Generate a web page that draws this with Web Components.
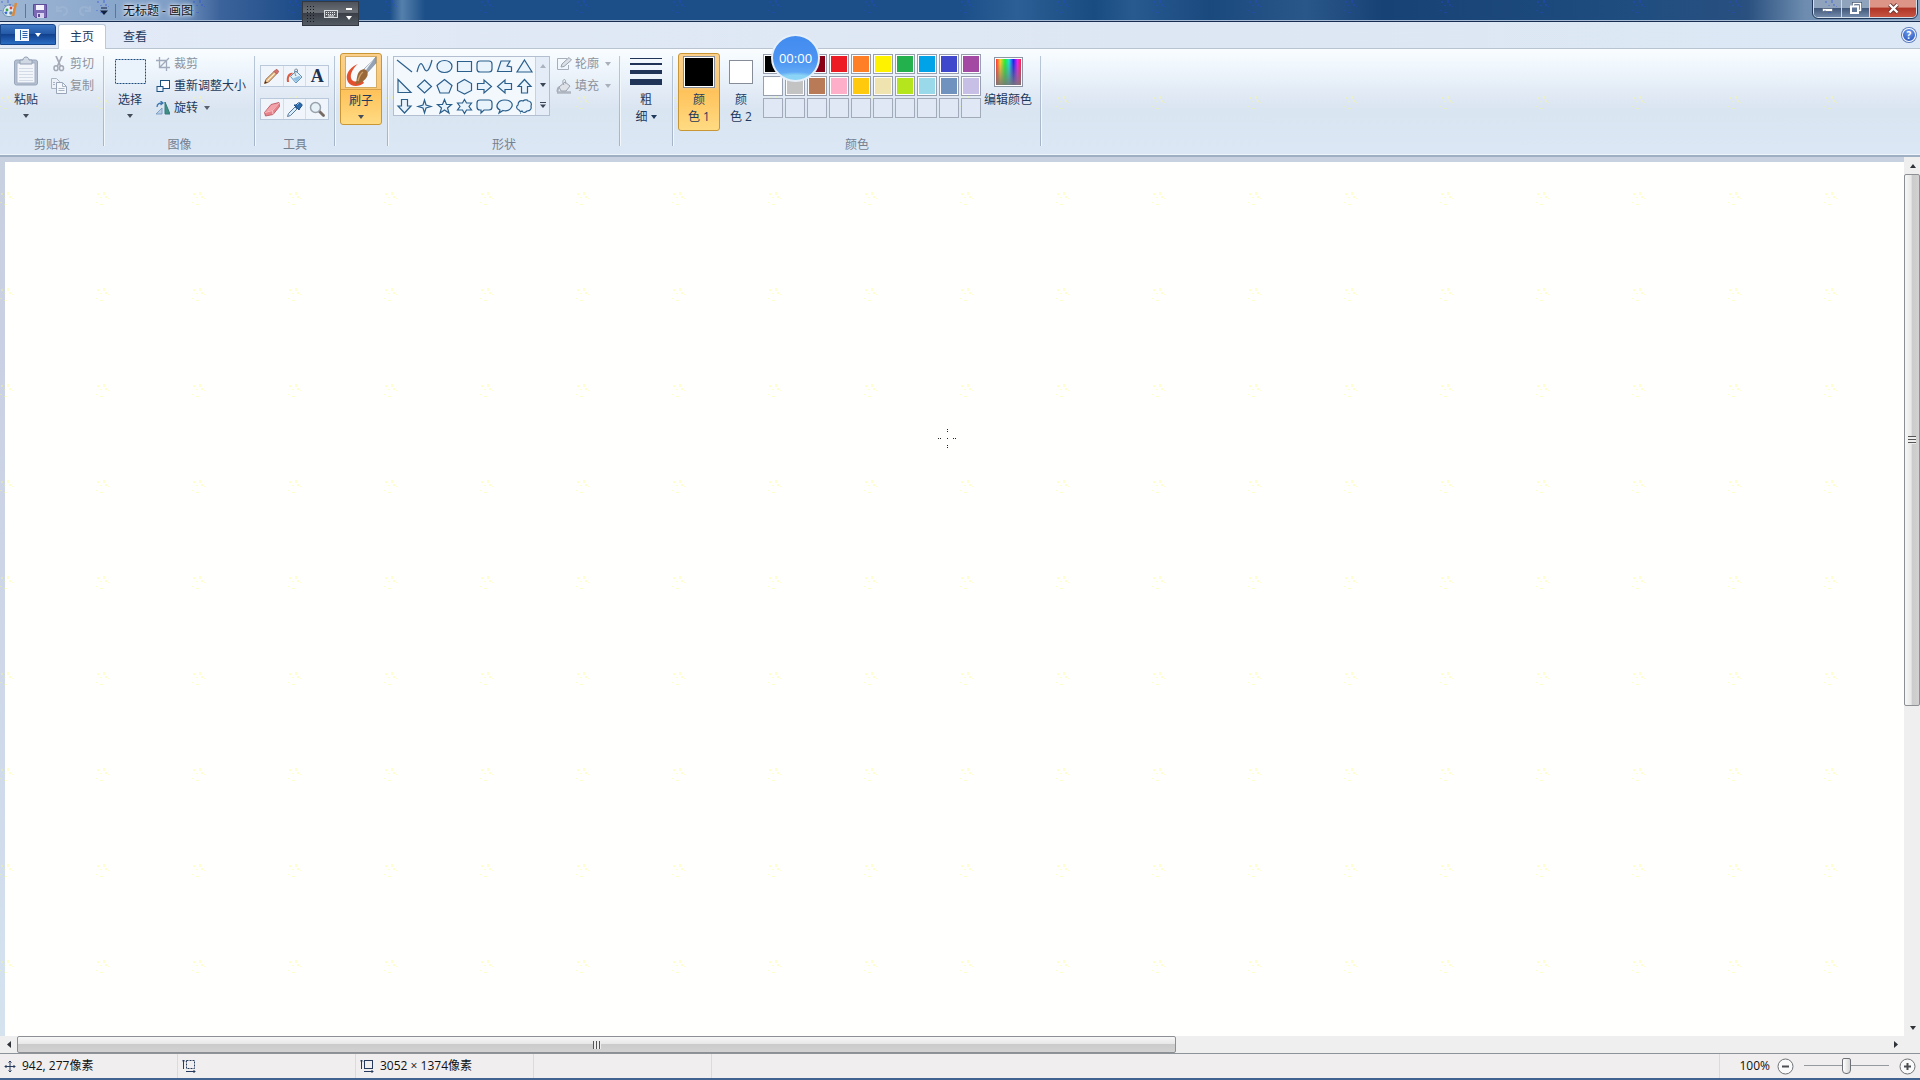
<!DOCTYPE html>
<html lang="zh-CN">
<head>
<meta charset="utf-8">
<title>无标题 - 画图</title>
<style>
html,body{margin:0;height:100%;overflow:hidden}
body{font:12px/16px "Open Sans","Noto Sans CJK SC",sans-serif;color:#1e395b}
</style>
</head>
<body>
<paint-app></paint-app>
<script>
const BASE = `
:host{box-sizing:border-box}
*{box-sizing:border-box}
button{font:inherit;color:inherit;background:none;border:0;padding:0;margin:0;display:block}
svg{display:block;flex:none}
`;
function define(name, html, setup) {
  customElements.define(name, class extends HTMLElement {
    connectedCallback() {
      if (this.shadowRoot) return;
      const root = this.attachShadow({mode: 'open'});
      const t = document.createElement('template');
      const body = typeof html === 'function' ? html(this) : html;
      t.innerHTML = `<style>${BASE}</style>${body}`;
      root.append(t.content.cloneNode(true));
      if (setup) setup(root, this);
    }
  });
}

const ICONS = {
  app: [16,17,'<path d="M1 11C1 6 4 3 8 3c4 0 5 2 4 4s1 2 0 5-9 4-11-1z" fill="#dfeaf5" stroke="#6c8fae"/><circle cx="5" cy="8" r="1.4" fill="#3ba64a"/><circle cx="9" cy="6" r="1.4" fill="#d94b3d"/><circle cx="4" cy="11" r="1.4" fill="#3f7fd0"/><circle cx="9" cy="11" r="1.8" fill="#5c86a5"/><path d="M14 1l-3 13" stroke="#e08a35" stroke-width="2.4"/>'],
  save: [14,14,'<path d="M.5.500h13v13H2.500l-2-2z" fill="#7d6ab6" stroke="#5d4b97"/><path d="M3 1h8v5H3z" fill="#f4f2fb"/><path d="M4 9h7v5H4z" fill="#d8d2ee"/><path d="M5 10h2v3H5z" fill="#5d4b97"/>'],
  undo: [16,14,'<path d="M3 6c4-5 10-3 10 1 0 3-2 4-4 4M3 2v5h5" fill="none" stroke="#a9bcd6" stroke-width="2" opacity=".45"/>'],
  redo: [16,14,'<path d="M13 6C9 1 3 3 3 7c0 3 2 4 4 4M13 2v5H8" fill="none" stroke="#a9bcd6" stroke-width="2" opacity=".45"/>'],
  more: [8,8,'<path d="M1 1h6" stroke="#12203c"/><path d="M0 3.500h8L4 8z" fill="#12203c"/>'],
  file: [14,12,'<path d="M0 0h14v12H0z" fill="#f5f9ff"/><path d="M5.500 1v10" stroke="#2d62ad"/><path d="M7.500 2.500h5M7.500 4.500h5M7.500 6.500h5M7.500 8.500h5" stroke="#2d62ad"/>'],
  down: [6,4,'<path d="M0 0h6L3 4z" fill="currentColor"/>'],
  up: [6,4,'<path d="M0 4h6L3 0z" fill="currentColor"/>'],
  left: [4,7,'<path d="M4 0v7L0 3.500z" fill="currentColor"/>'],
  right: [4,7,'<path d="M0 0v7l4-3.500z" fill="currentColor"/>'],
  gallery: [6,6,'<path d="M0 .5h6" stroke="currentColor"/><path d="M0 2.500h6L3 6z" fill="currentColor"/>'],
  paste: [26,32,'<rect x="1.500" y="4" width="23" height="25" rx="2" fill="#b4bfd0" stroke="#99a6bb"/><path d="M4 7h18v20H4z" fill="#f2f6fb" stroke="#a5b1c4"/><path d="M6 12.500h14M6 15.500h14M6 18.500h14M6 21.500h14M6 24.500h14" stroke="#d3dbe7"/><path d="M7 8V4h3c0-4 6-4 6 0h3v4z" fill="#d0d8e4" stroke="#929fb4"/>'],
  cut: [12,16,'<path d="M3 0l4.500 10M9 0L4.500 10" stroke="#a4a9b5" stroke-width="1.700" fill="none"/><ellipse cx="3" cy="12.200" rx="2" ry="2.400" fill="none" stroke="#a4a9b5" stroke-width="1.500"/><ellipse cx="8.500" cy="12.200" rx="2" ry="2.400" fill="none" stroke="#a4a9b5" stroke-width="1.500"/>'],
  copy: [16,16,'<path d="M.5.500h5l3 3v7h-8z" fill="#edf2f8" stroke="#a9b4c4"/><path d="M5.500 4.500h6l4 4v7h-10z" fill="#f4f8fc" stroke="#99a5b8"/><path d="M11.500 4.500v4h4M7.500 10.500h6M7.500 12.500h6M2 4.500h2M2 6.500h2" fill="none" stroke="#a9b4c4"/>'],
  select: [31,26,'<rect x=".5" y=".5" width="30" height="24" fill="#eaf3fc" stroke="#1d4c7c" stroke-dasharray="2 1"/>'],
  crop: [14,14,'<path d="M3.500 0v10.500H14M0 3.500h10.500V14M4 10l9-9" fill="none" stroke="#a0aaba" stroke-width="1.300"/>'],
  resize: [14,14,'<rect x="4.500" y="1.500" width="9" height="8" fill="#fff" stroke="#1c517e"/><rect x="1" y="7.500" width="6" height="5" fill="#eaf3fc" stroke="#1c517e"/><path d="M4 1.500h10" stroke="#1c517e"/>'],
  rotate: [14,14,'<path d="M9 1v12h5z" fill="#3f8f86" stroke="#337b7a"/><path d="M6 7v6H0z" fill="#b9cfe6" stroke="#6e96bd" stroke-width=".800"/><path d="M1 6c0-4 3-4 5-4M4.500 0L7 2 4.500 4" fill="none" stroke="#3f78b0" stroke-width="1.300"/>'],
  pencil: [17,17,'<path d="M1.500 15.500l1.300-4L11.500 3l2.500 2.500-8.500 8.700z" fill="#edc08e" stroke="#8b5c38" stroke-width=".9"/><path d="M11 3.500L13.500 6 15.500 4c.5-1-1.500-3-2.500-2.500z" fill="#d8706c" stroke="#a04a48" stroke-width=".7"/><path d="M1.500 15.500l.8-2.500 1.700 1.700z" fill="#3a2b20"/><path d="M4.500 12.500l7-7" stroke="#fff0d8"/>'],
  fill: [17,17,'<path d="M1 14c-1-6 2-10 6-9L4 8c-2 2-1 4-1 6z" fill="#dd5a40"/><path d="M4.500 8.500L10 3l6 6-6 6z" fill="#e4f0f8" stroke="#6393ba"/><path d="M7 10.500l3.500 3.500 4.500-5-2-1z" fill="#8fc0e2"/><path d="M10 8C8 4 8.500 1 10 1s2 1 1 4" fill="none" stroke="#6f8395"/>'],
  eraser: [18,16,'<path d="M1.500 11.500L8 3.500l8-2 .5 4-6.500 8-7.500 1.500z" fill="#e8838c" stroke="#b95c66" stroke-width=".9"/><path d="M2 11.500l7.500-2L16 2M9.500 9.500l.5 4" fill="none" stroke="#f8c2c5"/><path d="M2.500 10.800L8.500 4l6.500-1.600-5.700 6.600z" fill="#f2a3a9"/>'],
  picker: [17,17,'<path d="M1.500 15.500l1-3L9 6l2 2-6.500 6.500z" fill="#d8edfb" stroke="#59799c"/><path d="M8 4l5 5 1-2 1.500-1.500c2-2-2-5-4-3L10 4z" fill="#2c6bac" stroke="#1c4b80"/><path d="M11 4l2-2" stroke="#82b5e2"/>'],
  magnifier: [17,17,'<path d="M10 10l4.500 4.500" stroke="#786a65" stroke-width="2.800" stroke-linecap="round"/><circle cx="6.500" cy="6.500" r="5" fill="#e6f0f7" stroke="#98a2ac" stroke-width="1.500"/>'],
  brush: [32,32,'<rect x=".5" y=".5" width="31" height="31" fill="#f8fafc" stroke="#d4ab62"/><path d="M13 8C5 11-1 19 3 26c3 5 11 5 16 1l-3-5c-4 5-9 4-10 0S8 12 13 8z" fill="#e2502d"/><path d="M31 1v6L21.500 17.500 18 14z" fill="#93a3b5" stroke="#6f7f93" stroke-width=".6"/><path d="M30 1.500L18.500 14l1.500 1.500z" fill="#eef3f8"/><path d="M17.500 13.500c3-1 6 2 5 6-2 5-6 7-12 9 2-3 0-13 7-15z" fill="#9b6838"/><path d="M18 16c-3 2-4 5-5 9" stroke="#cba06a" stroke-width="1.500" fill="none"/>'],
  outline: [16,14,'<path d="M11 1.500H1.500v11h11V8" fill="none" stroke="#a7afbb"/><path d="M5 10l1-3 7-6.500L15.500 3 8 9.500z" fill="#dbe0e7" stroke="#9aa1ac"/>'],
  bucket: [16,15,'<path d="M1 13.500h14" stroke="#b0b6c0" stroke-width="2.500"/><path d="M3 8l6-5 5 4-4 5H5z" fill="#dfe3e9" stroke="#9aa1ac"/><path d="M8 6C6 3 7 1 8 .500s2 1 1.500 4" fill="none" stroke="#9aa1ac"/><path d="M3 8c-2 2-1 4-2 5" stroke="#a7afbb" fill="none" stroke-width="2"/>'],
  weight: [32,28,'<path d="M0 .5h32" stroke="#1f3457"/><path d="M0 6h32" stroke="#1f3457" stroke-width="2"/><path d="M0 14h32" stroke="#1f3457" stroke-width="4"/><path d="M0 24h32" stroke="#1f3457" stroke-width="6"/>'],
  spectrum: [29,30,'<defs><linearGradient id="h"><stop offset="0" stop-color="#f33"/><stop offset=".17" stop-color="#fc3"/><stop offset=".36" stop-color="#2e3"/><stop offset=".52" stop-color="#2dd"/><stop offset=".7" stop-color="#22e"/><stop offset=".86" stop-color="#e2e"/><stop offset="1" stop-color="#f23"/></linearGradient><linearGradient id="v" x2="0" y2="1"><stop offset=".1" stop-color="#777" stop-opacity="0"/><stop offset="1" stop-color="#777" stop-opacity=".9"/></linearGradient></defs><rect x=".5" y=".5" width="28" height="29" fill="#fff" stroke="#8c95a4"/><path d="M2 2h25v26H2z" fill="url(#h)"/><path d="M2 2h25v26H2z" fill="url(#v)"/>'],
  keyboard: [14,8,'<rect x=".5" y=".5" width="13" height="7" fill="#5d6269" stroke="#d9dcdf"/><path d="M2 2.500h10M2 4.500h10" stroke="#e9ecef" stroke-dasharray="1 1"/><path d="M4 6h6" stroke="#e9ecef"/>'],
  grip: [9,16,'<g stroke="#16191e" stroke-dasharray="1 2"><path d="M.5 0v16M3.500 0v16M6.500 0v16"/></g>'],
  kbmenu: [6,12,'<path d="M0 0h6v2H0zM0 8h6l-3 4z" fill="#fff"/>'],
  min: [11,5,'<rect x=".5" y=".5" width="10" height="3" rx="1" fill="#fff" stroke="#5f6f86"/>'],
  restore: [13,13,'<path d="M4.500 1.500h7v7h-7z" fill="none" stroke="#43566f" stroke-width="3"/><path d="M4.500 1.500h7v7h-7z" fill="none" stroke="#fff" stroke-width="1.600"/><path d="M2 4.500h7v6.500H2z" fill="#5e7596" stroke="#fff" stroke-width="2"/>'],
  close: [13,11,'<path d="M2.500 1.500l8 8M10.500 1.500l-8 8" stroke="#68322f" stroke-width="4"/><path d="M2.500 1.500l8 8M10.500 1.500l-8 8" stroke="#fff" stroke-width="2.400"/>'],
  move: [12,13,'<path d="M6 1v11M1 6.500h10M4.500 2.500L6 1l1.500 1.500M4.500 10.500L6 12l1.500-1.500M2.500 5L1 6.500 2.500 8M9.500 5L11 6.500 9.500 8" fill="none" stroke="#253a5c"/>'],
  selsize: [14,14,'<path d="M1.500 10V1M0 2.500L1.500 1 3 2.500M4 12.500h9M11.500 11l1.500 1.500-1.500 1.500" fill="none" stroke="#253a5c"/><rect x="4.500" y="1.500" width="8" height="8" fill="none" stroke="#253a5c" stroke-dasharray="2 1"/>'],
  imgsize: [14,14,'<path d="M1.500 10V1M0 2.500L1.500 1 3 2.500M4 12.500h9M11.500 11l1.500 1.500-1.500 1.500" fill="none" stroke="#253a5c"/><rect x="4.500" y="1.500" width="8" height="8" fill="none" stroke="#253a5c"/>'],
  minus: [17,17,'<circle cx="8.500" cy="8.500" r="7.500" fill="#fafafa" stroke="#6f7277"/><path d="M5 8.500h7" stroke="#4b4e53" stroke-width="2"/>'],
  plus: [17,17,'<circle cx="8.500" cy="8.500" r="7.500" fill="#fafafa" stroke="#6f7277"/><path d="M5 8.500h7M8.500 5v7" stroke="#4b4e53" stroke-width="2"/>'],
  cross: [20,20,'<path d="M1 10.500h3M16 10.500h3M10.500 1v3M10.500 17v3" stroke="#222" stroke-dasharray="1 1"/><path d="M10 10h1v1h-1z" fill="#222"/>']
};
const SHAPES = {
  '直线':'M2 2l15 12','曲线':'M2 14C5 2 7 5 9 10s5 4 8-8','椭圆形':'M2 8.500c0-8 15-8 15 0s-15 8-15 0z','矩形':'M2.500 3.500h14v10h-14z',
  '圆角矩形':'M5 3h9c2 0 3 1 3 3v5c0 2-1 3-3 3H5c-2 0-3-1-3-3V6c0-2 1-3 3-3z','多边形':'M2.500 13.500L6 3h9l-3 5 4.500 1v4.500z','三角形':'M9.500 2L17 14H2z',
  '直角三角形':'M3 1.500L16 14.500H3z','菱形':'M9.500 2l7 6.500-7 6.500-7-6.500z','五边形':'M9.500 1.500l7.500 6-3 7.500H5L2 7.500z','六边形':'M9.500 1.500l7 4v7l-7 3.500-7-3.500v-7z',
  '右箭头':'M2.500 5.500H9V2l7.500 6.500L9 15v-3.500H2.500z','左箭头':'M16.500 5.500H10V2L2.500 8.500 10 15v-3.500h6.500z','上箭头':'M6.500 15V8.500H3L9.500 1.500 16 8.500h-3.500V15z',
  '下箭头':'M6.500 1.500V8H3l6.500 7L16 8h-3.500V1.500z','四角星':'M9.500 2l1.500 5 5 1.500-5 1.500-1.500 5L8 10l-5-1.500L8 7z','五角星':'M9.500 1.500l2 5h5l-4 3.500 1.500 5-4.500-3L5 15l1.500-5-4-3.500h5z',
  '六角星':'M9.500 1.500l2 3.500h5l-2.500 3.500 2.500 3.500h-5l-2 3.500-2-3.500h-5L5 8.500 2.500 5h5z','圆角矩形标注':'M5 2h9q3 0 3 3v4q0 3-3 3H9l-3 3v-3H5q-3 0-3-3V5q0-3 3-3z',
  '椭圆形标注':'M5 12C-1 9 3 2 9.500 2S19 6 16 10c-2 3-6 3-8 2.500L4 15z','云形标注':'M4 12C1 11 1 8 3 7c0-4 3-5 5-4 2-2 5-1 5 0 3 0 4 3 3 5 1 3-1 5-4 5-2 2-4 2-5 0-1 1-3 0-3-1zM5 15h1'
};

define('px-icon', el => {
  const [w,h,s] = ICONS[el.getAttribute('name')];
  return `<style>:host{display:block;flex:none}</style><svg width="${w}" height="${h}" viewBox="0 0 ${w} ${h}" aria-hidden="true">${s}</svg>`;
});

/* Faint speckle that repeats over the whole window. */
define('dot-grid', el => {
  const c = el.getAttribute('tone') || '#ffff6a';
  return `<style>:host{position:absolute;inset:0;pointer-events:none;overflow:hidden}svg{width:100%;height:100%}</style>
  <svg aria-hidden="true"><defs><pattern id="p" width="96" height="96" patternUnits="userSpaceOnUse" y="${el.getAttribute('shift')||0}"><g fill="${c}" opacity=".32"><path d="M1 1h2v2H1zM7 0h2v3H7zM4 5h2v1H4zM9 4h2v2H9zM12 6h1v1h-1zM0 10h2v1H0zM4 12h3v1H4z"/></g></pattern></defs><rect width="100%" height="100%" fill="url(#p)"/></svg>`;
});

define('title-bar', `
<style>
:host{display:flex;align-items:flex-start;height:22px;position:relative;border-bottom:1px solid #182d52;box-shadow:inset 0 -1px #a5b9d3;
background:linear-gradient(90deg,#9eb6d3 0,#8fabce 80px,#7f9ec6 170px,#3c639b 220px,#1d4c87 300px,#1c4f88 390px,#5580ac 402px,#1c4f88 425px,#1c4f88 50%,#2b5f95 53%,#194c80 57%,#285a8f 59%,#1a497e 63%,#2a5789 68%,#174276 72%,#1f4d80 85%,#29507f 91%,#6d8caf 94%,#8ba4c2)}
.quick{display:flex;align-items:center;height:21px;gap:7px;flex:1;padding-left:2px}
.sep{width:1px;height:14px;background:#5c7698}
.name{color:#0c1628;text-shadow:0 0 6px #fff,0 0 3px #fff;line-height:20px}
.win{display:flex;height:18px;margin-right:3px;border:1px solid #d3deeb;border-top:0;border-radius:0 0 5px 5px;overflow:hidden;outline:1px solid #22395b}
.win button{display:grid;place-items:center;width:28px;height:17px;background:linear-gradient(#8fa3bd 0 45%,#42587a 50%,#7189aa);border-right:1px solid #ccd8e6}
.win button:first-child{padding-top:3px}
.win button:last-child{width:46px;border:0;background:linear-gradient(#dc9587 0 40%,#b13627 50%,#c55442)}
</style>
<dot-grid tone="#2448e0"></dot-grid>
<div class="quick"><px-icon name="app"></px-icon><span class="sep"></span>
<button aria-label="保存"><px-icon name="save"></px-icon></button><button aria-label="撤消"><px-icon name="undo"></px-icon></button><button aria-label="重做"><px-icon name="redo"></px-icon></button>
<button aria-label="自定义快速访问工具栏"><px-icon name="more"></px-icon></button><span class="sep"></span><span class="name">无标题 - 画图</span></div>
<div class="win"><button aria-label="最小化"><px-icon name="min"></px-icon></button><button aria-label="还原"><px-icon name="restore"></px-icon></button><button aria-label="关闭"><px-icon name="close"></px-icon></button></div>`);

define('tab-strip', `
<style>
:host{display:flex;height:27px;padding-top:2px;background:linear-gradient(90deg,#e1eaf6,#dde7f3 60%,#dce8f5);border-bottom:1px solid #b9c4d0}
.file{display:flex;align-items:center;justify-content:center;gap:6px;width:56px;height:21px;color:#fff;border:1px solid #16458a;border-radius:0 3px 0 0;background:linear-gradient(#3f78c4,#245aa8 45%,#12418e 50%,#2a6dc4)}
.tab{height:25px;padding:0 12px;margin-left:2px;line-height:20px}
.on{background:#fff;height:25px;border:1px solid #bcc9d8;border-bottom:0;border-radius:3px 3px 0 0;margin-bottom:-1px;padding:0 11px;line-height:18px;position:relative}
.tab+.tab{margin-left:5px}
.help{margin:4px 4px 0 auto;width:14px;height:14px;border-radius:50%;background:radial-gradient(circle at 50% 30%,#6e9bea,#1a45b5);box-shadow:0 0 0 1px #fff inset,0 0 0 1px #5878bd;color:#fff;font-weight:bold;line-height:14px;font-size:10px;text-align:center}
</style>
<button class="file" aria-label="画图"><px-icon name="file"></px-icon><px-icon name="down"></px-icon></button>
<button class="tab on">主页</button><button class="tab">查看</button><button class="help" aria-label="帮助">?</button>`);

define('ribbon-group', el => `
<style>
:host{display:flex;flex-direction:column;position:relative;padding:4px 5px 0;height:106px}
:host::after{content:"";position:absolute;right:0;top:7px;height:90px;width:1px;background:linear-gradient(#b9c7d8,#a5b4c8);box-shadow:1px 0 #f2f7fc}
.c{display:flex;align-items:flex-start;height:84px}
.l{text-align:center;color:#747f90;line-height:16px}
</style><div class="c"><slot></slot></div><div class="l">${el.getAttribute('label') || ''}</div>`);

define('big-button', el => `
<style>
:host{display:block;width:var(--w,42px)}
button{width:100%;height:var(--h,72px);display:flex;flex-direction:column;align-items:center;border:1px solid transparent;border-radius:3px;padding-top:1px}
:host([active]) button{border-color:#c89635;background:linear-gradient(#fbd08b 0,#f8c878 34px,#ffc25a 37px,#ffdb83)}
:host([split]) .t{border-top:1px solid #d7a149}
.i{height:34px;display:grid;place-items:center}
.t{width:100%;line-height:17px;white-space:pre-line;text-align:center;padding-top:2px}
.a{padding-top:6px;color:#444c5a}
</style><button><span class="i"><slot></slot></span><span class="t">${el.getAttribute('label')}</span>${el.hasAttribute('menu') ? '<px-icon class="a" name="down"></px-icon>' : ''}</button>`);

define('row-button', el => `
<style>
:host{display:block}
button{display:flex;align-items:center;height:22px;gap:3px;white-space:nowrap}
:host([off]) button{color:#8d929c}
.i{width:16px;display:grid;place-items:center}
.a{padding-left:3px;color:#59616e}
:host([off]) .a{color:#a9b0bb}
</style><button><span class="i"><px-icon name="${el.getAttribute('icon')}"></px-icon></span><span>${el.getAttribute('label')}</span>${el.hasAttribute('menu') ? '<px-icon class="a" name="down"></px-icon>' : ''}</button>`);

define('tool-grid', `
<style>
:host{display:grid;gap:11px;padding-top:12px;width:69px}
.r{display:flex;border:1px solid #b9c8db;background:#f0f5fb}
.r button{flex:1;height:20px;display:grid;place-items:center}
.r button+button{border-left:1px solid #d4deea}
.a{font:bold 18px/20px "Liberation Serif","Noto Sans CJK SC",serif;color:#1f3151}
</style>
<div class="r"><button aria-label="铅笔"><px-icon name="pencil"></px-icon></button><button aria-label="用颜色填充"><px-icon name="fill"></px-icon></button><button class="a" aria-label="文本">A</button></div>
<div class="r"><button aria-label="橡皮擦"><px-icon name="eraser"></px-icon></button><button aria-label="颜色选取器"><px-icon name="picker"></px-icon></button><button aria-label="放大镜"><px-icon name="magnifier"></px-icon></button></div>`);

define('shape-gallery', `
<style>
:host{display:flex;width:157px;height:60px;border:1px solid #b3bfd0;background:#f3f8fd}
.g{flex:1;display:grid;grid-template-columns:repeat(7,20px);grid-auto-rows:20px;padding-left:1px}
.g path{fill:#e9f3fc;stroke:#2a5f8c;stroke-width:1.2}
.s{width:14px;background:#e4edf7;border-left:1px solid #c6d2e1;color:#3c4656;display:grid}
.s button{display:grid;place-items:center}
.s button:first-child{color:#aab3c0}
</style><div class="g">${Object.entries(SHAPES).map(([n,d]) => `<button aria-label="${n}"><svg width="20" height="18" viewBox="0 0 20 18"><path d="${d}"/></svg></button>`).join('')}</div>
<div class="s"><button aria-label="上"><px-icon name="up"></px-icon></button><button aria-label="下"><px-icon name="down"></px-icon></button><button aria-label="更多"><px-icon name="gallery"></px-icon></button></div>`);

define('colour-chip', el => `
<style>:host{display:block;width:${el.getAttribute('size')}px;height:${el.getAttribute('size')}px;border:1px solid #868c98;padding:1px;background:#fff}
i{display:block;height:100%;background:${el.getAttribute('value')}}</style><i></i>`);

const PALETTE = ['#000','#7f7f7f','#880015','#ed1c24','#ff7f27','#fff200','#22b14c','#00a2e8','#3f48cc','#a349a4','#fff','#c3c3c3','#b97a57','#ffaec9','#ffc90e','#efe4b0','#b5e61d','#99d9ea','#7092be','#c8bfe7'];
define('colour-palette', `
<style>
:host{display:grid;grid-template-columns:repeat(10,20px);grid-auto-rows:20px;gap:2px;padding-top:1px}
button{border:1px solid #989fae;padding:1px;background:#fdfdfe}
button i{display:block;height:100%}
.e{background:#dfe8f4;border-color:#a3abbb}
</style>${PALETTE.map(c => `<button aria-label="${c}"><i style="background:${c}"></i></button>`).join('')}${'<button class="e" aria-label="自定义"></button>'.repeat(10)}`);

define('paint-ribbon', `
<style>
:host{display:flex;height:108px;position:relative;background:linear-gradient(#fafdff 0,#f0f7fd 16px,#e1eaf5 45px,#dae5f2 60px,#dce7f5);border-bottom:2px solid #9fafc3;box-shadow:inset 0 -1px #eef4fb}
.col{display:block;padding-left:4px}
</style>
<dot-grid shift="47"></dot-grid>
<ribbon-group label="剪贴板" style="width:104px"><big-button label="粘贴" menu><px-icon name="paste"></px-icon></big-button><div class="col"><row-button off icon="cut" label="剪切"></row-button><row-button off icon="copy" label="复制"></row-button></div></ribbon-group>
<ribbon-group label="图像" style="width:151px"><big-button label="选择" menu><px-icon name="select"></px-icon></big-button><div class="col"><row-button off icon="crop" label="裁剪"></row-button><row-button icon="resize" label="重新调整大小"></row-button><row-button icon="rotate" label="旋转" menu></row-button></div></ribbon-group>
<ribbon-group label="工具" style="width:80px"><tool-grid></tool-grid></ribbon-group>
<ribbon-group style="width:53px"><big-button label="刷子" active split menu><px-icon name="brush"></px-icon></big-button></ribbon-group>
<ribbon-group label="形状" style="width:232px"><shape-gallery style="margin-top:3px"></shape-gallery><div class="col" style="padding-left:6px"><row-button off icon="outline" label="轮廓" menu></row-button><row-button off icon="bucket" label="填充" menu></row-button></div></ribbon-group>
<ribbon-group style="width:53px"><size-button></size-button></ribbon-group>
<ribbon-group label="颜色" style="width:368px"><big-button label="颜
色 1" active style="--h:78px"><colour-chip size="32" value="#000"></colour-chip></big-button><big-button label="颜
色 2" style="--h:78px"><colour-chip size="24" value="#fff"></colour-chip></big-button><colour-palette style="margin-left:1px"></colour-palette><big-button label="编辑颜色" style="--w:54px"><px-icon name="spectrum"></px-icon></big-button></ribbon-group>`);

define('size-button', `
<style>:host{display:block;width:42px}button{width:100%;display:flex;flex-direction:column;align-items:center;line-height:17px;padding-top:2px}
.i{height:34px;display:grid;place-items:center}.r{display:flex;align-items:center;gap:3px}.n{padding-top:2px}</style>
<button><span class="i"><px-icon name="weight"></px-icon></span><span class="n">粗</span><span class="r">细<px-icon name="down"></px-icon></span></button>`);

define('scroll-bar', el => {
  const v = el.hasAttribute('vertical');
  return `<style>
:host{display:flex;flex-direction:${v ? 'column' : 'row'};background:#efefef;color:#2f3237}
button{flex:none;width:17px;height:17px;display:grid;place-items:center}
.track{flex:1;display:flex;flex-direction:inherit}
.thumb{flex:0 0 var(--size);display:grid;place-items:center;border:1px solid #8c8f94;border-radius:2px;background:linear-gradient(${v ? '90deg' : '180deg'},#f7f7f7,#e8e8e8 45%,#cbcbcb 50%,#d2d2d2)}
.thumb i{width:8px;height:8px;background:repeating-linear-gradient(${v ? '180deg' : '90deg'},#555 0 1px,#eee 1px 3px)}
</style><button aria-label="${v ? '向上' : '向左'}"><px-icon name="${v ? 'up' : 'left'}"></px-icon></button><div class="track"><div class="thumb"><i></i></div></div><button aria-label="${v ? '向下' : '向右'}"><px-icon name="${v ? 'down' : 'right'}"></px-icon></button>`;
});

define('paint-workspace', `
<style>
:host{display:grid;grid-template-columns:1fr 16px;grid-template-rows:1fr 17px;flex:1;min-height:0;background:#efefef}
.view{position:relative;background:linear-gradient(#c8d1e0,#c9d0e3 20%,#cfdaea 70%,#d5e3ef);padding:5px 0 0 5px}
.sheet{height:100%;background:#fffffd}
.cursor{position:absolute;left:calc(50% - 15px);top:calc(32% - 10px)}
</style>
<div class="view"><div class="sheet"></div><dot-grid shift="35"></dot-grid><px-icon class="cursor" name="cross"></px-icon></div>
<scroll-bar vertical style="--size:63%"></scroll-bar>
<scroll-bar style="--size:62%"></scroll-bar>`);

define('status-bar', `
<style>
:host{display:flex;height:27px;border-top:1px solid #8e9299;border-bottom:2px solid #40648f;background:#f0eeef;color:#111;line-height:24px}
.p{width:178px;display:flex;align-items:center;gap:6px;padding-left:4px;border-right:1px solid #dcd9df;white-space:nowrap}
.z{margin-left:auto;padding:0 4px 0 17px;display:flex;align-items:center;border-left:1px solid #dcd9df}
.z label{width:40px;text-align:right;padding-right:7px}
.z button{width:17px}
input{appearance:none;width:85px;height:18px;margin:0 10px;background:linear-gradient(#96999e,#96999e) 0 8px/100% 1px no-repeat}
input::-webkit-slider-thumb{appearance:none;width:9px;height:16px;border:1px solid #6d7076;border-radius:2px 2px 4px 4px;background:linear-gradient(90deg,#fff,#d6d6d6)}
</style>
<div class="p"><px-icon name="move"></px-icon>942, 277像素</div><div class="p"><px-icon name="selsize"></px-icon></div><div class="p"><px-icon name="imgsize"></px-icon>3052 × 1374像素</div><div class="p"></div>
<div class="z"><label for="z">100%</label><button aria-label="缩小"><px-icon name="minus"></px-icon></button><input id="z" type="range" min="0" max="100" value="50"><button aria-label="放大"><px-icon name="plus"></px-icon></button></div>`);

define('input-widget', `
<style>:host{position:absolute;left:302px;top:1px;width:57px;height:25px;display:flex;align-items:center;justify-content:space-between;padding:0 6px 0 4px;background:linear-gradient(#4e535b,#6b7077 45%,#3a3f47 50%,#555b64);border:1px solid #343941}</style>
<px-icon name="grip"></px-icon><px-icon name="keyboard"></px-icon><px-icon name="kbmenu"></px-icon>`);

define('record-timer', `
<style>:host{position:absolute;left:771px;top:34px;width:49px;height:48px;border-radius:50%;border:2px solid #e5effa;background:radial-gradient(ellipse 28px 8px at 50% 100%,#8bd4f5 60%,transparent),linear-gradient(#438cf0,#4b94f2 55%,#6fb6f7);color:#fff;display:grid;place-items:center;font-size:13px}</style>
<time>00:00</time>`);

define('paint-app', `
<style>:host{display:flex;flex-direction:column;height:100vh;position:relative}</style>
<title-bar></title-bar><tab-strip></tab-strip><paint-ribbon></paint-ribbon><paint-workspace></paint-workspace><status-bar></status-bar>
<input-widget></input-widget><record-timer></record-timer>`);
</script>
</body>
</html>
